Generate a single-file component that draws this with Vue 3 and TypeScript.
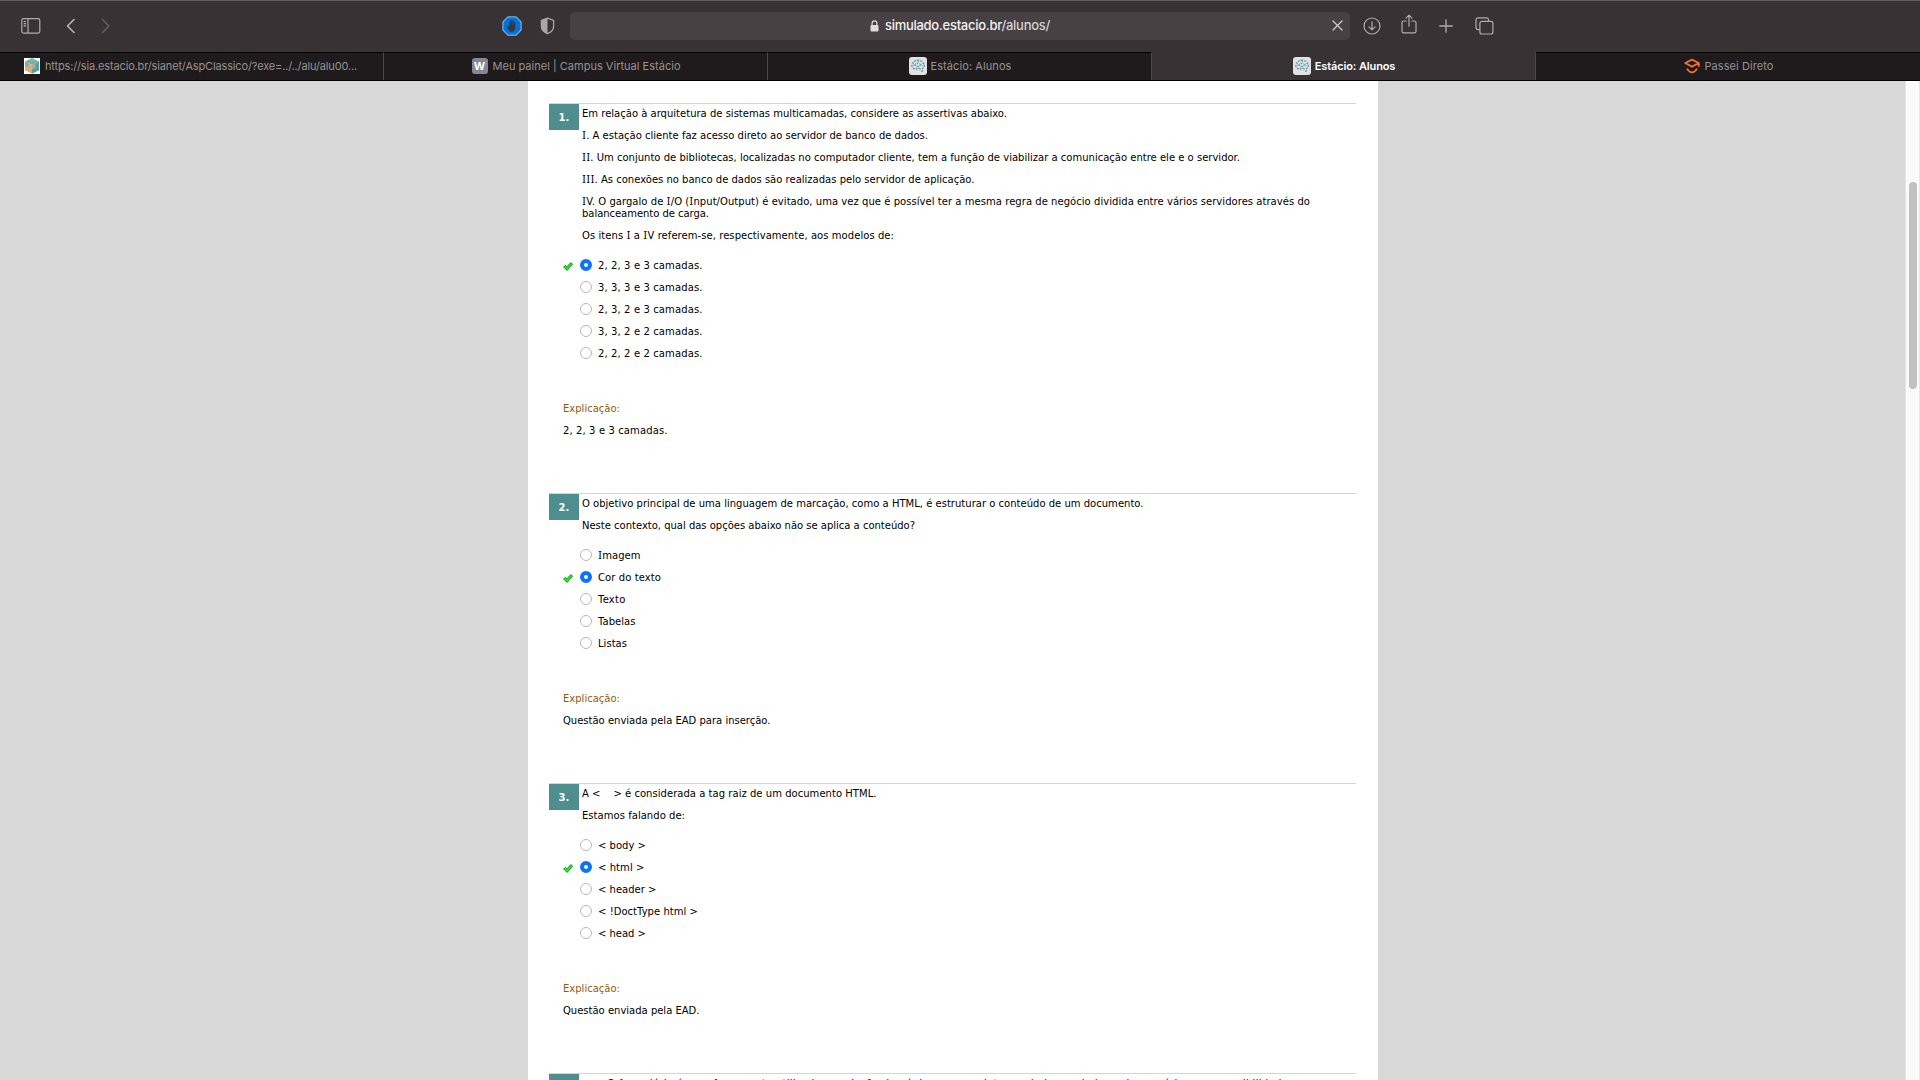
<script setup lang="ts">
interface Line {
  text: string
  width: number
}
interface Option extends Line {
  checked?: boolean
}
interface Question {
  number: string
  statement: Line[][]
  options: Option[]
  explanation: Line
}
interface Tab extends Line {
  icon: 'cube' | 'w' | 'brain' | 'passei'
  active?: boolean
}

// Spreads a line's letters so that it takes up the given measure.
const vFit = {
  mounted(el: HTMLElement, binding: { value: number }) {
    const natural = el.getBoundingClientRect().width
    const count = (el.textContent ?? '').length
    el.style.letterSpacing = `${(binding.value - natural) / count}px`
  },
}

const runs = (text: string): string[] => text.split(/(I)/).filter((part) => part !== '')

const line = (text: string, width: number): Line => ({ text, width })
const option = (text: string, width: number, checked = false): Option => ({ text, width, checked })

const tabs: Tab[] = [
  { icon: 'cube', text: 'https://sia.estacio.br/sianet/AspClassico/?exe=../../alu/alu00...', width: 312 },
  { icon: 'w', text: 'Meu painel | Campus Virtual Estácio', width: 188 },
  { icon: 'brain', text: 'Estácio: Alunos', width: 81 },
  { icon: 'brain', text: 'Estácio: Alunos', width: 80.5, active: true },
  { icon: 'passei', text: 'Passei Direto', width: 69 },
]

const brainDots: number[][] = [
  [4, 6], [6, 4], [9, 3.4], [12, 4.2], [14.4, 6.5], [15.3, 9], [13.8, 11.2], [13, 14.2], [10.6, 11.6],
  [7.6, 12], [4.8, 11.6], [3, 9], [6, 8], [8.6, 6.5], [11.4, 8], [9, 9.5],
]

const questions: Question[] = [
  {
    number: '1.',
    statement: [
      [line('Em relação à arquitetura de sistemas multicamadas, considere as assertivas abaixo.', 425)],
      [line('I. A estação cliente faz acesso direto ao servidor de banco de dados.', 346)],
      [line('II. Um conjunto de bibliotecas, localizadas no computador cliente, tem a função de viabilizar a comunicação entre ele e o servidor.', 658)],
      [line('III. As conexões no banco de dados são realizadas pelo servidor de aplicação.', 392.5)],
      [
        line('IV. O gargalo de I/O (Input/Output) é evitado, uma vez que é possível ter a mesma regra de negócio dividida entre vários servidores através do', 728),
        line('balanceamento de carga.', 127),
      ],
      [line('Os itens I a IV referem-se, respectivamente, aos modelos de:', 312)],
    ],
    options: [
      option('2, 2, 3 e 3 camadas.', 104.5, true),
      option('3, 3, 3 e 3 camadas.', 104.5),
      option('2, 3, 2 e 3 camadas.', 104.5),
      option('3, 3, 2 e 2 camadas.', 104.5),
      option('2, 2, 2 e 2 camadas.', 104.5),
    ],
    explanation: line('2, 2, 3 e 3 camadas.', 104.5),
  },
  {
    number: '2.',
    statement: [
      [line('O objetivo principal de uma linguagem de marcação, como a HTML, é estruturar o conteúdo de um documento.', 561.5)],
      [line('Neste contexto, qual das opções abaixo não se aplica a conteúdo?', 333)],
    ],
    options: [
      option('Imagem', 42.5),
      option('Cor do texto', 63, true),
      option('Texto', 27.5),
      option('Tabelas', 37.5),
      option('Listas', 29),
    ],
    explanation: line('Questão enviada pela EAD para inserção.', 207.5),
  },
  {
    number: '3.',
    statement: [
      [line('A <\u00a0\u00a0\u00a0 > é considerada a tag raiz de um documento HTML.', 294.5)],
      [line('Estamos falando de:', 103)],
    ],
    options: [
      option('< body >', 48),
      option('< html >', 46.5, true),
      option('< header >', 58.5),
      option('< !DoctType html >', 100),
      option('< head >', 48),
    ],
    explanation: line('Questão enviada pela EAD.', 136.5),
  },
]

const nextStatement = line(
  'O formulário é uma ferramenta utilizada na criação de páginas para coletar os dados enviados pelos usuários com possibilidades.',
  690,
)
</script>

<template>
  <div class="window">
    <header class="toolbar">
      <svg class="sidebar" width="20" height="16" viewBox="0 0 20 16" fill="none" stroke="#b0abad" stroke-width="1.2">
        <rect x=".8" y=".7" width="18" height="14.4" rx="1.8" />
        <path d="M7 .7v14.4M2.7 3.5h2.4M2.7 5.7h2.4M2.7 7.9h2.4" />
      </svg>
      <svg class="back" width="10" height="16" viewBox="0 0 10 16" fill="none" stroke="#b9b5b6" stroke-width="1.6" stroke-linecap="round" stroke-linejoin="round">
        <path d="M8 1.5 1.5 8 8 14.5" />
      </svg>
      <svg class="forward" width="10" height="16" viewBox="0 0 10 16" fill="none" stroke="#625c5e" stroke-width="1.6" stroke-linecap="round" stroke-linejoin="round">
        <path d="M1.5 1.5 8 8l-6.5 6.5" />
      </svg>
      <svg class="blocker" width="20" height="20" viewBox="0 0 20 20">
        <path d="M6 .9h8L19.1 6v8L14 19.1H6L.9 14V6z" fill="#0a6fd0" stroke="#62b7f8" stroke-width="1.2" />
        <path d="M6.3 13.2 4.9 10.500c-.4-.9.7-1.300 1.200-.5l1 1.300V6c0-1 1.300-1 1.300 0v3h.3V4.700c0-1 1.400-1 1.400 0V9h.3V5.200c0-1 1.300-1 1.300 0v4.300h.3V6.800c0-.9 1.200-.9 1.200 0v5.300c0 2-1 3.700-3.600 3.700-1.500 0-2.600-.9-3.300-2.600z" fill="#33373f" />
      </svg>
      <svg class="shield" width="15" height="18" viewBox="0 0 15 18">
        <path d="M7.5 1.2 13.6 3.400v6c0 3.500-3 5.900-6.100 7.200C4.400 15.300 1.400 12.900 1.400 9.400v-6z" fill="none" stroke="#aaa6a7" stroke-width="1.3" stroke-linejoin="round" />
        <path d="M7.5 1.2v15.400C4.400 15.300 1.400 12.900 1.400 9.400v-6z" fill="#aaa6a7" />
      </svg>
      <div class="address">
        <svg class="lock" width="9" height="12" viewBox="0 0 9 12">
          <path d="M2.1 5.5V3.400a2.400 2.600 0 0 1 4.800 0v2.100" fill="none" stroke="#dedcdd" stroke-width="1.2" />
          <rect x=".5" y="5" width="8" height="6.5" rx="1" fill="#dedcdd" />
        </svg>
        <span v-fit="165" class="url">simulado.estacio.br<span class="path">/alunos/</span></span>
        <svg class="stop" width="11" height="11" viewBox="0 0 11 11" stroke="#d0cdce" stroke-width="1.2" stroke-linecap="round">
          <path d="m1 1 9 9m0-9-9 9" />
        </svg>
      </div>
      <svg class="download" width="18" height="18" viewBox="0 0 18 18" fill="none" stroke="#b0abad" stroke-width="1.2" stroke-linecap="round" stroke-linejoin="round">
        <circle cx="9" cy="9" r="8" />
        <path d="M9 4.8v8M5.9 9.800 9 12.900l3.100-3.100" />
      </svg>
      <svg class="share" width="16" height="20" viewBox="0 0 16 20" fill="none" stroke="#b0abad" stroke-width="1.2" stroke-linecap="round" stroke-linejoin="round">
        <path d="M5.2 7H2.700C1.600 7 1 7.600 1 8.600v8.600c0 1 .6 1.600 1.700 1.600h10.600c1.100 0 1.700-.6 1.700-1.600V8.600c0-1-.6-1.600-1.700-1.600h-2.500M8 12.300V1.200M5 4.100l3-3 3 3" />
      </svg>
      <svg class="plus" width="14" height="14" viewBox="0 0 14 14" stroke="#b0abad" stroke-width="1.3" stroke-linecap="round">
        <path d="M7 .8v12.400M.8 7h12.400" />
      </svg>
      <svg class="overview" width="19" height="18" viewBox="0 0 19 18" fill="none" stroke="#b0abad" stroke-width="1.2">
        <path d="M4.8 12.600H3c-1.300 0-2-.7-2-2V2.800c0-1.300.7-2 2-2h8.500c1.300 0 2 .7 2 2v1.400" />
        <rect x="4.9" y="4.3" width="13" height="12.7" rx="2" />
      </svg>
    </header>

    <nav class="tabs">
      <div v-for="(tab, i) in tabs" :key="i" class="tab" :class="[tab.icon, { active: tab.active }]">
        <svg v-if="tab.icon === 'cube'" width="16" height="16" viewBox="0 0 16 16">
          <path d="M0 0h16v16H0z" fill="#fff" />
          <path d="m8 .3 7 3.200L8 7 1 3.500z" fill="#6db3ae" />
          <path d="M1 3.500 8 7v8.700l-7-3.400z" fill="#e0ad78" />
          <path d="m15 3.500-7 3.500v8.700l7-3.400z" fill="#4aa3ad" />
          <path d="M1 3.500 4.500 5.200v4.500L1 8z" fill="#75b4aa" />
          <path d="m8 7 3.500-1.800v4.500L8 11.400z" fill="#c9a57b" />
          <path d="m4.500 1.900 3.500 1.700 3.500-1.700L8 .3z" fill="#94b29c" />
        </svg>
        <span v-else-if="tab.icon === 'w'" class="w-icon">W</span>
        <svg v-else-if="tab.icon === 'brain'" width="18" height="18" viewBox="0 0 18 18">
          <rect width="18" height="18" rx="3" fill="#e2e2e4" />
          <path d="M4.800 12 2.400 9.300 3.600 5.500 7 3.200l4.200-.2 3.600 2.600 1 3.500-2 2.400-.4 3.400-2.600-3.100zM3.600 5.500 6 8l3-4.800L11.400 8l3.400-2.400M2.400 9.300 6 8l3 1.500L11.400 8l4.400 1M4.800 12 9 9.500l1.800 2.300 3-.3" fill="none" stroke="#9dbac7" stroke-width=".8" />
          <circle v-for="(dot, d) in brainDots" :key="d" :cx="dot[0]" :cy="dot[1]" r=".8" fill="#4e9baa" />
        </svg>
        <svg v-else width="16" height="16" viewBox="0 0 16 16" fill="none" stroke="#f4702a" stroke-width="1.8" stroke-linejoin="round">
          <path d="M8 1.600 14.800 5 8 8.600 1.200 5zM14.800 5v3.800" />
          <path d="M3 10.600c2.700 4.900 7.300 4.900 10 0" />
        </svg>
        <span v-fit="tab.width" class="title">{{ tab.text }}</span>
      </div>
    </nav>

    <div class="viewport">
      <main class="page">
        <section v-for="question in questions" :key="question.number" class="question">
          <div class="heading">
            <div class="number">{{ question.number }}</div>
            <div class="statement">
              <p v-for="(paragraph, p) in question.statement" :key="p">
                <span v-for="row in paragraph" :key="row.text" v-fit="row.width" class="line"><span v-for="(run, r) in runs(row.text)" :key="r" :class="{ slab: run === 'I' }">{{ run }}</span></span>
              </p>
            </div>
          </div>
          <ul class="options">
            <li v-for="item in question.options" :key="item.text">
              <svg class="mark" width="10" height="9" viewBox="0 0 10 9">
                <path v-if="item.checked" d="M.5 5 2.500 3.500l1.400 1.300L7.800.5l1.800 1.500L4.200 8.500z" fill="#08fa18" stroke="#0b6a12" stroke-width=".7" />
              </svg>
              <span class="radio" :class="{ on: item.checked }"></span>
              <span v-fit="item.width" class="line"><span v-for="(run, r) in runs(item.text)" :key="r" :class="{ slab: run === 'I' }">{{ run }}</span></span>
            </li>
          </ul>
          <div class="explanation">
            <p class="label"><span v-fit="57" class="line">Explicação:</span></p>
            <p><span v-fit="question.explanation.width" class="line">{{ question.explanation.text }}</span></p>
          </div>
        </section>
        <section class="question">
          <div class="heading">
            <div class="number">4.</div>
            <div class="statement indented">
              <p><span v-fit="nextStatement.width" class="line">{{ nextStatement.text }}</span></p>
            </div>
          </div>
        </section>
      </main>
      <aside class="scrollbar"><div class="thumb"></div></aside>
    </div>
  </div>
</template>

<style>
body {
  margin: 0;
  overflow: hidden;
}
</style>

<style scoped>
.window {
  display: flex;
  flex-direction: column;
  width: 1920px;
  height: 1080px;
  overflow: hidden;
  background: #d8d8d8;
}
svg {
  display: block;
  flex: none;
}
.toolbar {
  box-sizing: border-box;
  display: flex;
  align-items: center;
  flex: none;
  height: 52px;
  padding: 0 0 1px 21px;
  border-top: 1px solid #615d5f;
  background: #393234;
  font-family: Inter, "Liberation Sans", sans-serif;
}
.toolbar > svg {
  margin-bottom: 1px;
}
.back { margin-left: 25px; }
.forward { margin-left: 25px; }
.blocker { margin-left: 391px; }
.shield { margin-left: 18px; }
.address {
  box-sizing: border-box;
  display: flex;
  align-items: center;
  width: 780px;
  height: 28px;
  margin-left: 15px;
  padding: 0 7px 2px 300px;
  border-radius: 5px;
  background: #474143;
}
.lock { margin-top: 1px; }
.url {
  margin-left: 6px;
  color: #f3f2f2;
  font-size: 13px;
  font-weight: 500;
  line-height: 16px;
  white-space: nowrap;
}
.path { color: #d3d1d1; }
.stop { margin-left: auto; }
.download { margin-left: 13px; }
.toolbar > .share { margin: 0 0 4px 20px; }
.plus { margin-left: 22px; }
.overview { margin-left: 22px; }

.tabs {
  display: grid;
  grid-template-columns: repeat(5, 384px);
  flex: none;
  height: 28px;
  border-bottom: 1px solid #000;
  background: #1f1b1c;
  font-family: Inter, "Liberation Sans", sans-serif;
}
.tab {
  box-sizing: border-box;
  display: flex;
  align-items: center;
  justify-content: center;
  gap: 5px;
  height: 28px;
  padding: 0 0 1px 1px;
  border-top: 1px solid #000;
  border-right: 1px solid #4d484a;
  color: #969293;
  font-size: 11px;
}
.tab.cube {
  padding-right: 3px;
}
.tab.brain {
  gap: 4px;
}
.tab:last-child {
  border-right: 0;
}
.tab.active {
  border-top-color: #393234;
  background: #393234;
  color: #fff;
  font-weight: 600;
}
.title {
  padding-bottom: 1px;
  line-height: 14px;
  white-space: nowrap;
}
.w-icon {
  width: 16px;
  height: 16px;
  border-radius: 3px;
  background: #868796;
  color: #fff;
  font-size: 11px;
  font-weight: 700;
  line-height: 16px;
  text-align: center;
}

.viewport {
  display: flex;
  flex: none;
  height: 999px;
  overflow: hidden;
}
.page {
  box-sizing: border-box;
  width: 850px;
  height: 999px;
  margin-left: 528px;
  padding: 22px 22px 0 21px;
  overflow: hidden;
  background: #fff;
  color: #000;
  font: 10px/12px "DejaVu Sans", Verdana, sans-serif;
}
.question {
  padding-bottom: 56px;
  border-top: 1px solid #d5d5d5;
}
.heading {
  display: flex;
  align-items: flex-start;
}
.number {
  width: 30px;
  height: 26px;
  background: #4f8e8e;
  color: #fff;
  font-weight: 700;
  line-height: 27px;
  text-align: center;
}
.statement {
  padding: 4px 0 0 3px;
}
.statement.indented {
  padding-left: 28px;
}
p {
  margin: 0 0 10px;
}
.line {
  display: block;
  width: max-content;
  height: 12px;
  white-space: nowrap;
}
.slab {
  padding: 0 .3px;
  font-family: "Noto Sans", "DejaVu Sans", sans-serif;
  font-size: 10.5px;
  line-height: 0;
}
.options {
  margin: 3px 0 0;
  padding: 0;
  list-style: none;
}
.options li {
  display: flex;
  align-items: center;
  height: 22px;
}
.mark {
  margin: 1px 7px 0 14px;
}
.radio {
  box-sizing: border-box;
  width: 12px;
  height: 12px;
  margin: 0 6px 2px 0;
  border: 1px solid #b9b9b9;
  border-radius: 50%;
  background: #fff;
}
.radio.on {
  border: 4px solid #0a72ff;
}
.explanation {
  padding: 38px 0 0 14px;
}
.explanation p:last-child {
  margin-bottom: 0;
}
.label {
  color: #965a0c;
}
.scrollbar {
  box-sizing: border-box;
  width: 15px;
  margin-left: auto;
  padding: 101px 0 0 3px;
  border: solid #e6e6e6;
  border-width: 0 1px;
  background: #fafafa;
}
.thumb {
  width: 8px;
  height: 207px;
  border-radius: 4px;
  background: #c1c1c1;
}
</style>
